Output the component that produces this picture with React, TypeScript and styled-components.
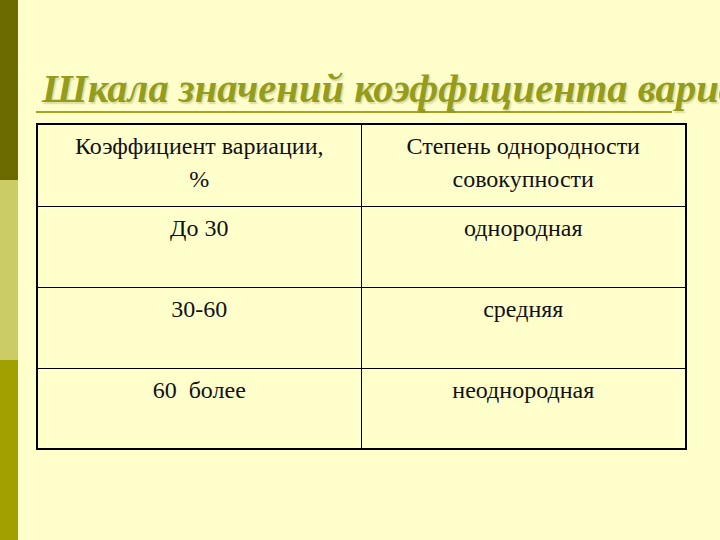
import styled, { createGlobalStyle } from 'styled-components';

const GlobalStyle = createGlobalStyle`
  body {
    margin: 0;
    background: #ffffcc;
  }
`

const Slide = styled.div`
  display: flex;
  width: 720px;
  height: 540px;
  overflow: hidden;
  background: #ffffcc;
  font-family: "Liberation Serif", serif;
`

const Sidebar = styled.div`
  width: 18px;
  flex-shrink: 0;
  display: flex;
  flex-direction: column;
`

const SideBlock = styled.div<{ $color: string }>`
  flex: 1;
  background: ${p => p.$color};
`

const Content = styled.main`
  flex: 1;
  padding-left: 18px;
  min-width: 0;
`

const TitleBar = styled.h1`
  width: 636px;
  height: 50px;
  margin: 63px 0 0;
  padding-left: 6px;
  box-sizing: border-box;
  border-bottom: 2px solid #a3a324;
  white-space: nowrap;
`

const TitleText = styled.span`
  display: inline-block;
  font-family: "Liberation Serif", serif;
  font-size: 28px;
  line-height: 28px;
  font-weight: bold;
  font-style: italic;
  color: #949c1c;
  transform: scale(1.45);
  transform-origin: 0 0;
  text-shadow: 1px 1px 1px rgba(110, 110, 40, 0.25);
`

const Table = styled.table`
  width: 649px;
  margin-top: 10px;
  border-collapse: collapse;
  border: 2px solid #000;
  table-layout: fixed;
`

const Row = styled.tr<{ $height: number }>`
  height: ${p => p.$height}px;
`

const Cell = styled.td`
  border: 1px solid #000;
  padding: 5px 4px 0;
  vertical-align: top;
  text-align: center;
  font-family: "Liberation Serif";
  font-size: 24px;
  line-height: 33px;
  color: #111;
`

const rows = [
  ['До 30', 'однородная'],
  ['30-60', 'средняя'],
  ['60\u00a0 более', 'неоднородная'],
]

export default function App() {
  return (
    <>
      <GlobalStyle />
      <Slide>
        <Sidebar>
          <SideBlock $color="#6b6b00" />
          <SideBlock $color="#cccc66" />
          <SideBlock $color="#a0a000" />
        </Sidebar>
        <Content>
          <TitleBar>
            <TitleText>Шкала значений коэффициента вариации</TitleText>
          </TitleBar>
          <Table>
            <colgroup>
              <col style={{ width: 324 }} />
              <col style={{ width: 325 }} />
            </colgroup>
            <tbody>
              <Row $height={82}>
                <Cell>Коэффициент вариации,<br />%</Cell>
                <Cell>Степень однородности<br />совокупности</Cell>
              </Row>
              {rows.map(([a, b]) => (
                <Row key={a} $height={81}>
                  <Cell>{a}</Cell>
                  <Cell>{b}</Cell>
                </Row>
              ))}
            </tbody>
          </Table>
        </Content>
      </Slide>
    </>
  )
}
